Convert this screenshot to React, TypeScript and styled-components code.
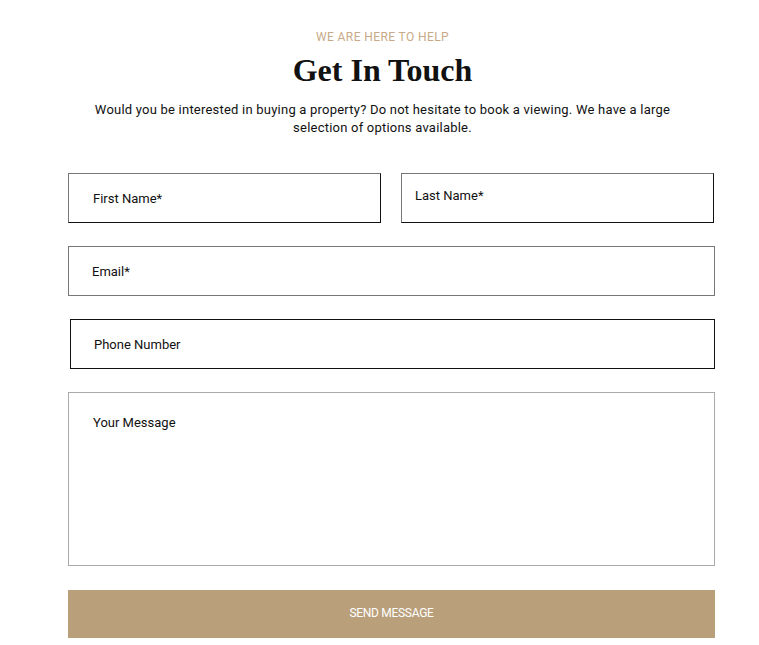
import React from 'react'
import styled, { createGlobalStyle } from 'styled-components'

const GlobalStyle = createGlobalStyle`
  body {
    margin: 0;
    background: #fff;
    font-family: Roboto, "Liberation Sans", sans-serif;
  }
`

const Page = styled.div`
  width: 759px;
  height: 645px;
  overflow: hidden;
  background: #fff;
`

const Header = styled.div`
  display: flex;
  flex-direction: column;
  align-items: center;
  padding: 30px 0 0 6px;
  text-align: center;
`

const Eyebrow = styled.div`
  color: #c8aa88;
  font-size: 12px;
  letter-spacing: 0.4px;
  line-height: 14px;
`

const Title = styled.h1`
  margin: 8px 0 0;
  font-family: "Liberation Serif", serif;
  font-weight: 700;
  font-size: 32px;
  line-height: 36px;
  color: #111;
`

const Intro = styled.p`
  margin: 13px 0 0;
  width: 590px;
  font-size: 13px;
  line-height: 18px;
  letter-spacing: 0.22px;
  color: #111;
`

const Form = styled.form`
  display: flex;
  flex-direction: column;
  gap: 23px;
  padding: 36px 44px 0 68px;
`

const Row = styled.div<{ $cols: number; $inset?: number }>`
  display: grid;
  grid-template-columns: repeat(${p => p.$cols}, 1fr);
  gap: 20px;
  margin-right: ${p => p.$inset || 0}px;
`

const Input = styled.input<{ $pad: number; $border: string; $lift?: number }>`
  box-sizing: border-box;
  width: 100%;
  min-width: 0;
  height: 50px;
  padding: 0 0 ${p => p.$lift || 0}px ${p => p.$pad}px;
  border: 1px solid ${p => p.$border};
  border-top-color: #777;
  border-left-color: #777;
  font-family: Roboto, "Liberation Sans", sans-serif;
  font-size: 13px;
  outline: none;
  &::placeholder {
    color: #111;
  }
`

const PhoneInput = styled(Input)`
  width: calc(100% - 2px);
  margin-left: 2px;
  border-color: #111;
`

const Message = styled.textarea`
  box-sizing: border-box;
  height: 174px;
  padding: 22px 24px;
  border: 1px solid #aaa;
  resize: none;
  font-family: Roboto, "Liberation Sans", sans-serif;
  font-size: 13px;
  outline: none;
  &::placeholder {
    color: #111;
  }
`

const SendButton = styled.button`
  margin-top: 1px;
  height: 48px;
  padding: 0 0 3px;
  border: none;
  background: #b9a07b;
  color: #fff;
  font-family: Roboto, "Liberation Sans", sans-serif;
  font-size: 12px;
  letter-spacing: -0.3px;
  cursor: pointer;
`

export default function App() {
  return (
    <Page>
      <GlobalStyle />
      <Header>
        <Eyebrow>WE ARE HERE TO HELP</Eyebrow>
        <Title>Get In Touch</Title>
        <Intro>
          Would you be interested in buying a property? Do not hesitate to book a viewing. We have a large
          selection of options available.
        </Intro>
      </Header>
      <Form onSubmit={e => e.preventDefault()}>
        <Row $cols={2} $inset={1}>
          <Input $pad={24} $border="#111" placeholder="First Name*" />
          <Input $pad={13} $border="#111" $lift={5} placeholder="Last Name*" />
        </Row>
        <Row $cols={1}>
          <Input $pad={23} $border="#777" placeholder="Email*" />
        </Row>
        <Row $cols={1}>
          <PhoneInput $pad={23} $border="#111" placeholder="Phone Number" />
        </Row>
        <Message placeholder="Your Message" />
        <SendButton type="submit">SEND MESSAGE</SendButton>
      </Form>
    </Page>
  )
}
